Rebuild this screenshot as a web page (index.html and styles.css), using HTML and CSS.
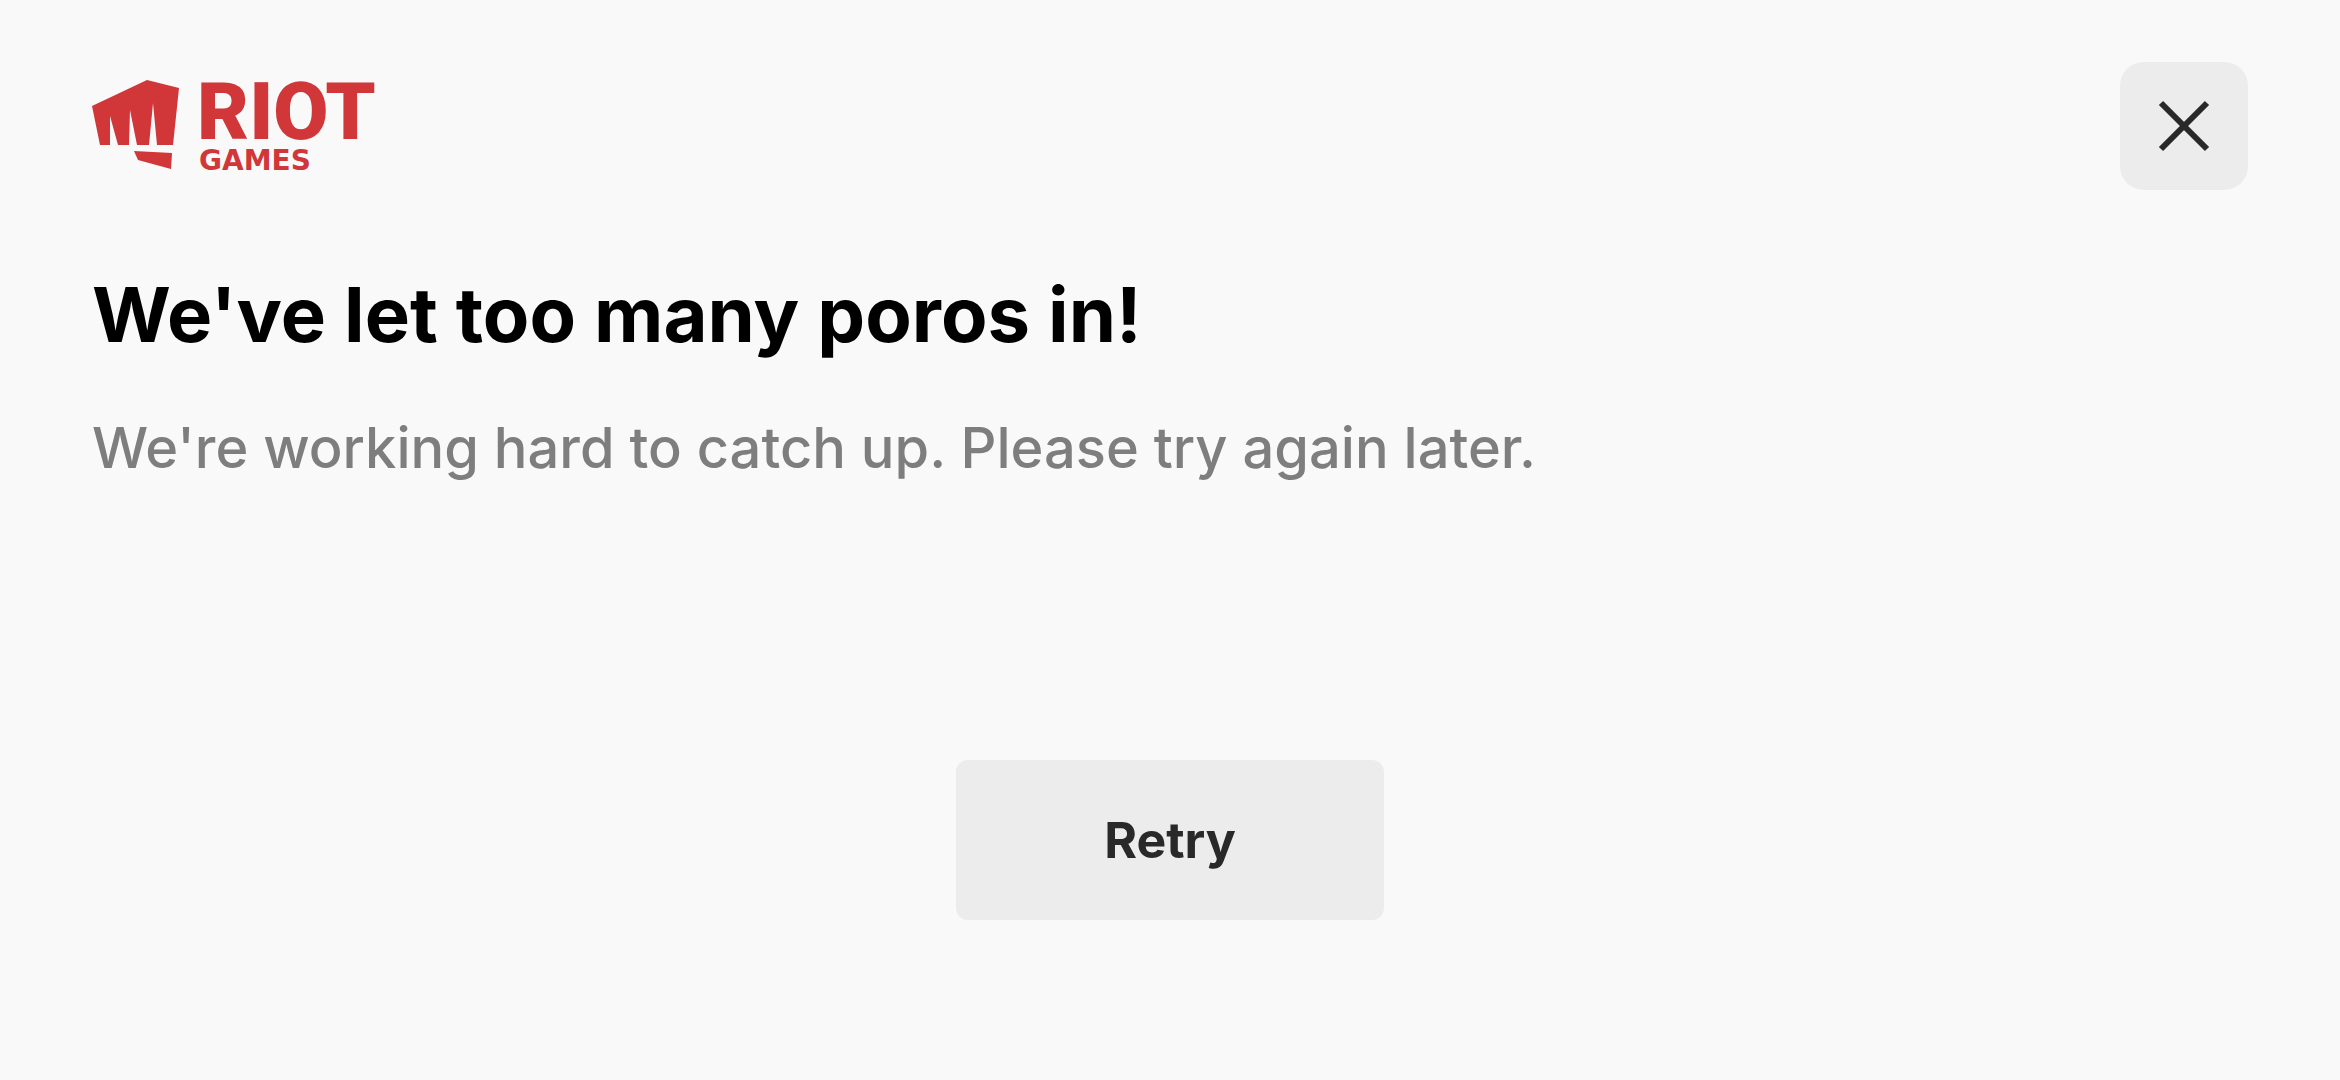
FILE: index.html
```html
<!DOCTYPE html>
<html lang="en">
<head>
<meta charset="utf-8">
<meta name="viewport" content="width=device-width, initial-scale=1">
<title>Riot Games</title>
<link rel="stylesheet" href="styles.css">
</head>
<body>
<div class="page">
  <header class="top-bar">
    <svg class="logo" viewBox="0 0 284 92" role="img" aria-label="Riot Games">
      <path d="M0 26 55 0 87 8 81 65H65L61 23 57 65H45L38 30 37 65H26L18 36 18 65H8Z"/>
      <path d="M42 71 80 73 79 89 46 80Z"/>
      <text class="logo-riot" x="105" y="59">RIOT</text>
      <text class="logo-games" x="107" y="90">GAMES</text>
    </svg>
    <button class="close-button" type="button" aria-label="Close">
      <svg class="close-icon" viewBox="0 0 48 48" aria-hidden="true">
        <path d="M1 1 47 47M47 1 1 47"/>
      </svg>
    </button>
  </header>
  <main class="content">
    <h1 class="title">We've let too many poros in!</h1>
    <p class="message">We're working hard to catch up. Please try again later.</p>
    <button class="retry-button" type="button">Retry</button>
  </main>
</div>
</body>
</html>
```

FILE: styles.css
```css
* {
  box-sizing: border-box;
}

body {
  margin: 0;
  background: #f9f9f9;
  color: #000;
  font-family: Inter, "Open Sans", sans-serif;
}

.page {
  padding: 62px 92px;
}

.top-bar {
  display: flex;
  align-items: center;
  justify-content: space-between;
}

.logo {
  width: 284px;
  height: 92px;
  fill: #d13639;
  overflow: visible;
}

.logo-riot {
  font-family: Roboto, sans-serif;
  font-size: 80px;
  font-weight: 900;
}

.logo-games {
  font-family: "DejaVu Sans", sans-serif;
  font-size: 28px;
  font-weight: 700;
}

.close-button {
  display: flex;
  align-items: center;
  justify-content: center;
  width: 128px;
  height: 128px;
  padding: 0;
  border: 0;
  border-radius: 24px;
  background: #ececec;
}

.close-icon {
  width: 48px;
  height: 48px;
  fill: none;
  stroke: #292929;
  stroke-width: 6;
  overflow: visible;
}

.content {
  display: flex;
  flex-direction: column;
  padding-top: 76px;
}

.title {
  margin: 0;
  font-size: 76px;
  font-weight: 700;
  line-height: 96px;
}

.message {
  margin: 50px 0 0;
  color: #7e7e7e;
  font-size: 56px;
  font-weight: 500;
  line-height: 72px;
}

.retry-button {
  align-self: center;
  width: 428px;
  height: 160px;
  margin-top: 276px;
  border: 0;
  border-radius: 12px;
  background: #ececec;
  color: #292929;
  font-family: inherit;
  font-size: 50px;
  font-weight: 700;
}
```
